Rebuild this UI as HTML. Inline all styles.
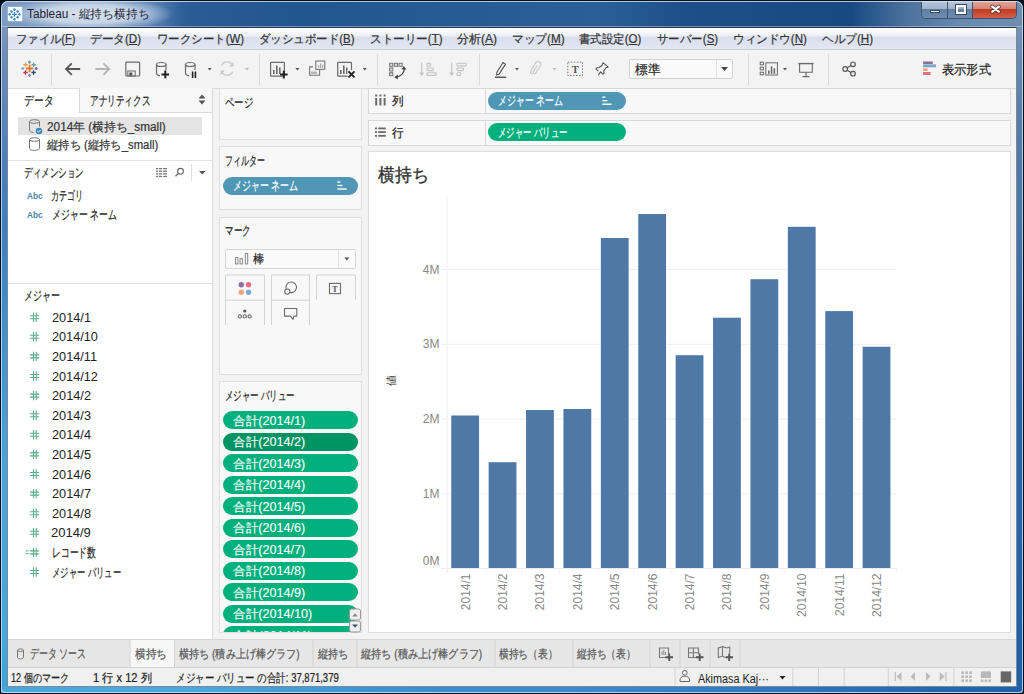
<!DOCTYPE html>
<html lang="ja"><head>
<meta charset="utf-8">
<style>
*{margin:0;padding:0;box-sizing:border-box}
html,body{width:1024px;height:694px;overflow:hidden;background:#06101c}
body{font-family:"Liberation Sans",sans-serif;font-size:12px;color:#333;position:relative}
.a{position:absolute}
.t{position:absolute;white-space:nowrap;line-height:14px;-webkit-text-stroke:0.2px currentColor}
/* frame */
#frame{left:0;top:0;width:1024px;height:694px;border-radius:8px 8px 5px 5px;background:#06101c}
#lf{left:1px;top:8px;width:7px;height:685px;background:linear-gradient(180deg,#7f9cc2 0,#6a8ab8 60px,#4a7fbc 160px,#3c80c2 220px,#4aa3d8 450px,#45a8dc 640px,#3aa0d8 694px)}
#rf{left:1016px;top:8px;width:7px;height:685px;background:linear-gradient(180deg,#7a96b8 0,#5a7ea8 100px,#2a64a8 400px,#2060a8 694px)}
#bf{left:1px;top:686px;width:1022px;height:7px;border-radius:0 0 4px 4px;background:linear-gradient(90deg,#48a8dc 0,#4aa8dc 200px,#3a90d0 400px,#3a88cc 600px,#2a70b8 850px,#2060a8 1022px)}
#gl{left:1px;top:1px;width:1022px;height:692px;border-radius:7px 7px 4px 4px;box-shadow:inset 0 0 0 1px rgba(215,230,245,0.8)}
#cb{left:7px;top:27px;width:1010px;height:660px;border:1px solid #7b8899;border-top-color:#2a3a4c}
#title{left:1px;top:1px;width:1022px;height:26px;border-radius:7px 7px 0 0;
 background:radial-gradient(ellipse 84px 17px at 88px 13px,rgba(222,230,240,0.97) 0%,rgba(205,218,234,0.9) 55%,rgba(160,185,215,0.5) 85%,rgba(120,150,190,0) 100%),linear-gradient(90deg,#7f9cc2 0,#7a98c0 40px,#5f86b6 150px,#3a6aa2 172px,#2a5c95 185px,#215690 300px,#2a5f98 600px,#1d5088 680px,#184a80 850px,#4f74a0 910px,#6a8ab0 960px,#6e8db0 1022px)}
#client{left:8px;top:28px;width:1008px;height:658px;background:#f3f3f3;overflow:hidden}
#menubar{left:0;top:0;width:1008px;height:22px;background:linear-gradient(180deg,#ffffff 0,#f6f8fb 4px,#eceff7 8px,#d9dfee 9px,#dbe0ee 12px,#e3e7f3 21px);border-bottom:1px solid #c8cdd9}
#toolbar{left:0;top:22px;width:1008px;height:39px;background:#f3f3f3;border-bottom:1px solid #dcdcdc}
.sep{position:absolute;width:1px;background:#d8d8d8}
.panel{position:absolute;background:#f8f8f8;border:1px solid #dfdfdf}
.pill{position:absolute;height:18px;border-radius:9px;color:#fff;line-height:18px;padding-left:10px;white-space:nowrap}
.blue{background:#4f97b5}
.green{background:#00b07c}
.pt{position:absolute;left:10px;top:2.6px;line-height:14px;font-size:13px;-webkit-text-stroke:0.2px currentColor}
</style>
</head>
<body>
<div id="frame" class="a"></div>
<div id="lf" class="a"></div><div id="rf" class="a"></div><div id="bf" class="a"></div>
<div id="title" class="a">
  <svg class="a" style="left:6px;top:5px" width="16" height="16" viewBox="0 0 16 16">
    <rect x="0.8" y="0.8" width="14.4" height="14.4" fill="#f8fafc"></rect>
    <g stroke="#3a8cc8" stroke-width="1.3" fill="none">
      <path d="M7.5 6v4.8M5.1 8.4h4.8"></path>
      <path d="M7.5 2.3v2.6M6.2 3.6h2.6M7.5 12v2.6M6.2 13.3h2.6M2.6 7.1v2.6M1.3 8.4h2.6M12.4 7.1v2.6M11.1 8.4h2.6"></path>
      <path d="M4.5 4.2v2.6M3.2 5.5h2.6M10.6 4.2v2.6M9.3 5.5h2.6M4.5 10v2.6M3.2 11.3h2.6M10.6 10v2.6M9.3 11.3h2.6"></path>
    </g>
  </svg>
  <div class="t" style="left: 26.2px; top: 6px; color: rgb(26, 34, 48); font-size: 12px; -webkit-text-stroke: 0px; transform: scaleX(0.9811); transform-origin: 0px 0px;">Tableau - 縦持ち横持ち</div>
  <div class="a" style="left:0;top:25px;width:1022px;height:1px;background:rgba(205,220,238,0.45)"></div>
</div>
<!-- caption buttons -->
<div class="a" style="left:921px;top:1px;width:96px;height:18px;border-radius:0 0 5px 5px;border:1px solid #3d5470;border-top:none;overflow:hidden">
  <div class="a" style="left:0;top:0;width:26px;height:17px;background:linear-gradient(180deg,#b9c8da 0,#9fb3ca 45%,#5f7fa3 50%,#6d8cae 100%);border-right:1px solid #3d5470"></div>
  <div class="a" style="left:26px;top:0;width:25px;height:17px;background:linear-gradient(180deg,#b9c8da 0,#9fb3ca 45%,#5f7fa3 50%,#6d8cae 100%);border-right:1px solid #3d5470"></div>
  <div class="a" style="left:51px;top:0;width:45px;height:17px;background:linear-gradient(180deg,#e4a79a 0,#d58575 45%,#c23a1f 50%,#d0604a 100%)"></div>
  <div class="a" style="left:8px;top:9px;width:10px;height:3px;background:#fff;border:1px solid #3a4a5c"></div>
  <div class="a" style="left:34px;top:4px;width:10px;height:9px;border:2px solid #fff;outline:1px solid #3a4a5c"></div>
  <svg class="a" style="left:64px;top:2px" width="16" height="14"><path d="M6.3 3.7l6.6 4.9M12.9 3.7l-6.6 4.9" stroke="#3a2a2a" stroke-width="4" stroke-linecap="round" opacity="0.7"></path><path d="M6.3 3.7l6.6 4.9M12.9 3.7l-6.6 4.9" stroke="#fff" stroke-width="2.3" stroke-linecap="round"></path></svg>
</div>

<div id="client" class="a"></div>
<div id="gl" class="a"></div>
<div id="cb" class="a"></div>
<div id="menubar" class="a" style="left:8px;top:28px">
    <div class="t" style="left: 7.7px; top: 4px; transform: scaleX(0.9409); transform-origin: 0px 0px;">ファイル(<u>F</u>)</div>
    <div class="t" style="left: 82.2px; top: 4px; transform: scaleX(0.9702); transform-origin: 0px 0px;">データ(<u>D</u>)</div>
    <div class="t" style="left: 149.2px; top: 4px; transform: scaleX(0.9537); transform-origin: 0px 0px;">ワークシート(<u>W</u>)</div>
    <div class="t" style="left: 251.2px; top: 4px; transform: scaleX(0.9559); transform-origin: 0px 0px;">ダッシュボード(<u>B</u>)</div>
    <div class="t" style="left: 361.7px; top: 4px; transform: scaleX(0.9636); transform-origin: 0px 0px;">ストーリー(<u>T</u>)</div>
    <div class="t" style="left: 449.2px; top: 4px; transform: scaleX(1.0021); transform-origin: 0px 0px;">分析(<u>A</u>)</div>
    <div class="t" style="left: 504.2px; top: 4px; transform: scaleX(0.9741); transform-origin: 0px 0px;">マップ(<u>M</u>)</div>
    <div class="t" style="left: 571.2px; top: 4px; transform: scaleX(0.9542); transform-origin: 0px 0px;">書式設定(<u>O</u>)</div>
    <div class="t" style="left: 649.2px; top: 4px; transform: scaleX(0.9545); transform-origin: 0px 0px;">サーバー(<u>S</u>)</div>
    <div class="t" style="left: 725.45px; top: 4px; transform: scaleX(0.9632); transform-origin: 0px 0px;">ウィンドウ(<u>N</u>)</div>
    <div class="t" style="left: 814.2px; top: 4px; transform: scaleX(0.9702); transform-origin: 0px 0px;">ヘルプ(<u>H</u>)</div>
</div>
<div id="toolbar" class="a" style="left:8px;top:50px"></div>
<svg class="a" style="left:0;top:0" width="1024" height="694" viewBox="0 0 1024 694">
<!-- tableau logo -->
<g stroke-width="1.4" fill="none">
 <path d="M29.6 64.8v7.4M25.9 68.5h7.4" stroke="#e8762b" stroke-width="1.8"></path>
 <path d="M29.5 60.5v3.2M27.9 62.1h3.2" stroke="#7199a6"></path>
 <path d="M25.5 62.5v4.4M23.3 64.7h4.4" stroke="#f0a24b"></path>
 <path d="M33.6 62.5v4.4M31.4 64.7h4.4" stroke="#6a9cab"></path>
 <path d="M22.8 67v3M21.3 68.5h3" stroke="#7ab0c0"></path>
 <path d="M36.2 67v3M34.7 68.5h3" stroke="#6e6ea0"></path>
 <path d="M25.5 70.3v4.4M23.3 72.5h4.4" stroke="#d0344a"></path>
 <path d="M33.6 70.3v4.4M31.4 72.5h4.4" stroke="#2b4f8a"></path>
 <path d="M29.5 73.8v3.2M27.9 75.4h3.2" stroke="#8a8ab8"></path>
</g>
<g fill="#d9d9d9">
 <rect x="51" y="54" width="1" height="31"></rect>
 <rect x="259" y="54" width="1" height="31"></rect>
 <rect x="377" y="54" width="1" height="31"></rect>
 <rect x="479" y="54" width="1" height="31"></rect>
 <rect x="748" y="54" width="1" height="31"></rect>
 <rect x="828" y="54" width="1" height="31"></rect>
</g>
<!-- back/forward -->
<path d="M80.2 69H66.5M71.8 63.3L66 69l5.8 5.8" stroke="#555" stroke-width="1.8" fill="none"></path>
<path d="M95.3 69h13.7M103.4 63.3l5.8 5.7-5.8 5.8" stroke="#b4b4b4" stroke-width="1.8" fill="none"></path>
<!-- save -->
<rect x="125.8" y="62.2" width="13.8" height="13.8" rx="0.8" stroke="#6a6a6a" stroke-width="1.2" fill="none"></rect>
<rect x="127.8" y="71" width="7.4" height="5" stroke="#6a6a6a" stroke-width="1" fill="none"></rect>
<rect x="129.3" y="72.5" width="3" height="3" fill="#555"></rect>
<!-- add ds -->
<g stroke="#6a6a6a" stroke-width="1.2" fill="none">
 <path d="M156.5 64.5v8.8c0 1.3 1.6 2.2 3.5 2.5M166 64.5v5.5"></path>
 <ellipse cx="161.25" cy="64.5" rx="4.75" ry="2"></ellipse>
</g>
<path d="M165.3 70.6v7.6M161.5 74.4h7.6" stroke="#222" stroke-width="2"></path>
<!-- pause ds -->
<g stroke="#6a6a6a" stroke-width="1.2" fill="none">
 <path d="M185.5 64.5v8.8c0 1.3 1.6 2.2 3.5 2.5M195 64.5v5.5"></path>
 <ellipse cx="190.25" cy="64.5" rx="4.75" ry="2"></ellipse>
</g>
<path d="M192.6 71.5v6.5M195.4 71.5v6.5" stroke="#222" stroke-width="1.6"></path>
<g fill="#555">
 <path d="M207.7 68h4l-2 2.4z"></path>
 <path d="M295.4 68h4l-2 2.4z"></path>
 <path d="M362.7 68h4l-2 2.4z"></path>
 <path d="M515 68h4l-2 2.4z"></path>
 <path d="M783 68h4l-2 2.4z"></path>
</g>
<g fill="#bdbdbd">
 <path d="M245 68h4l-2 2.4z"></path>
 <path d="M552.5 68h4l-2 2.4z"></path>
</g>
<!-- refresh -->
<g stroke="#c9c9c9" stroke-width="1.3" fill="none">
 <path d="M221.5 65.5a6.2 6.2 0 0 1 11 -0.5"></path>
 <path d="M232.8 71.5a6.2 6.2 0 0 1 -11 0.5"></path>
</g>
<path d="M233.5 61.8v4.8h-4.4z" fill="#c9c9c9"></path>
<path d="M220.5 75.2v-4.8h4.4z" fill="#c9c9c9"></path>
<!-- new worksheet -->
<rect x="270.6" y="62.4" width="13.8" height="13.8" rx="0.8" stroke="#6a6a6a" stroke-width="1.2" fill="none"></rect>
<g fill="#6a6a6a"><rect x="273" y="70" width="1.6" height="4"></rect><rect x="276" y="65.5" width="1.6" height="8.5"></rect><rect x="279" y="67.5" width="1.6" height="6.5"></rect></g>
<path d="M283.8 70.8v7.6M280 74.6h7.6" stroke="#222" stroke-width="2"></path>
<!-- duplicate -->
<g stroke="#777" stroke-width="1.1" fill="none">
 <rect x="315.8" y="61" width="9" height="8.4"></rect>
 <path d="M313 66.9h-3.4v8.4h10v-6"></path>
</g>
<g fill="#aaa"><rect x="318" y="65" width="1.2" height="3"></rect><rect x="320" y="63.5" width="1.2" height="4.5"></rect><rect x="322" y="64.5" width="1.2" height="3.5"></rect></g>
<g fill="#777"><rect x="311.5" y="71.5" width="1" height="2.5"></rect><rect x="313.5" y="71.5" width="1" height="2.5"></rect><rect x="315.5" y="71.5" width="1" height="2.5"></rect></g>
<!-- clear sheet -->
<rect x="337.7" y="62.4" width="13.8" height="13.8" rx="0.8" stroke="#6a6a6a" stroke-width="1.2" fill="none"></rect>
<g fill="#6a6a6a"><rect x="340" y="70" width="1.6" height="4"></rect><rect x="343" y="65.5" width="1.6" height="8.5"></rect><rect x="346" y="67.5" width="1.6" height="6.5"></rect></g>
<rect x="347.5" y="70" width="8" height="8" fill="#f3f3f3"></rect>
<path d="M348.5 71.4l6 6M354.5 71.4l-6 6" stroke="#222" stroke-width="1.9"></path>
<!-- swap -->
<g stroke="#777" stroke-width="1" fill="#ddd">
 <rect x="389.6" y="63.3" width="3.2" height="3"></rect><rect x="394.3" y="63.3" width="3.2" height="3"></rect><rect x="399" y="63.3" width="3.2" height="3"></rect>
 <rect x="389.6" y="68" width="3.2" height="3"></rect>
 <rect x="389.6" y="72.7" width="3.2" height="3"></rect>
</g>
<path d="M396 77a9 9 0 0 0 8.5-8.5" stroke="#444" stroke-width="1.2" fill="none"></path>
<path d="M403.7 66l2.8 3.6h-5z" fill="#444"></path>
<path d="M394.5 77.2l3.3-2.8v5z" fill="#444"></path>
<!-- sort asc/desc -->
<g stroke="#c2c2c2" stroke-width="1.1" fill="none">
 <path d="M421.7 62.5v12"></path>
 <rect x="426.9" y="63.3" width="3.7" height="2.6" rx="0.8"></rect>
 <rect x="426.9" y="68" width="6.5" height="2.6" rx="0.8"></rect>
 <rect x="426.9" y="72.8" width="9.3" height="2.6" rx="0.8"></rect>
 <path d="M451.7 62.5v12"></path>
 <rect x="456.9" y="63.3" width="9.3" height="2.6" rx="0.8"></rect>
 <rect x="456.9" y="68" width="6.5" height="2.6" rx="0.8"></rect>
 <rect x="456.9" y="72.8" width="3.7" height="2.6" rx="0.8"></rect>
</g>
<path d="M419.2 72.5h5l-2.5 3.5z M449.2 72.5h5l-2.5 3.5z" fill="#c2c2c2"></path>
<!-- pen -->
<path d="M503 62.5l2.5 1.6-6.2 9.8-2.7 1.2 0.3-2.9z" stroke="#555" stroke-width="1.1" fill="none" stroke-linejoin="round"></path>
<rect x="495" y="76.6" width="11.2" height="1.3" fill="#444"></rect>
<!-- paperclip -->
<path d="M532.5 74.5c-1.8-1-2.2-2.8-1.4-4.3l4.5-7.3c0.9-1.4 2.7-1.7 4-0.9 1.3 0.8 1.6 2.4 0.8 3.8l-4.3 7c-0.5 0.8-1.4 1.1-2.1 0.7-0.7-0.4-0.9-1.3-0.4-2.1l3.8-6.2" stroke="#c6c6c6" stroke-width="1.1" fill="none"></path>
<!-- T label -->
<rect x="567.8" y="62.1" width="14.7" height="13.4" stroke="#777" stroke-width="1" stroke-dasharray="1.5 1.5" fill="none"></rect>
<text x="575.2" y="73" font-family="Liberation Serif" font-weight="bold" font-size="10.5" fill="#555" text-anchor="middle">T</text>
<!-- pin -->
<path d="M603 62.6l5.2 4.5-2.3 0.6-2.2 3.2 0.3 2.5-1.1 0.8-2.3-2.3-2.4 3.3M603 62.6l-0.8 2.6-3.1 2.3-2.3 0.2-0.8 1.2 2.4 2.2" stroke="#555" stroke-width="1.1" fill="none" stroke-linejoin="round"></path>
<!-- show me cards icon -->
<g stroke="#6a6a6a" stroke-width="1" fill="none">
 <rect x="760.2" y="62.2" width="3.2" height="2.6"></rect><rect x="760.2" y="67.2" width="3.2" height="2.6"></rect><rect x="760.2" y="72.2" width="3.2" height="2.6"></rect>
 <rect x="765.8" y="62.8" width="11.6" height="12.2"></rect>
</g>
<g fill="#666"><rect x="768" y="70.5" width="1.5" height="3.3"></rect><rect x="770.8" y="66.3" width="1.5" height="7.5"></rect><rect x="773.6" y="68.3" width="1.5" height="5.5"></rect></g>
<!-- presentation -->
<g stroke="#6a6a6a" fill="none">
 <path d="M798.3 63.6h15.3" stroke-width="1.4"></path>
 <path d="M799.6 64v8.3h12.7V64M806 72.3v3.8M802.5 76.6h7" stroke-width="1.1"></path>
</g>
<!-- share -->
<g stroke="#555" stroke-width="1.2" fill="none">
 <circle cx="853" cy="64.3" r="2.3"></circle><circle cx="845.2" cy="69" r="2.3"></circle><circle cx="853" cy="73.7" r="2.3"></circle>
 <path d="M847.2 67.8l3.8-2.3M847.2 70.2l3.8 2.3"></path>
</g>
<!-- show me -->
<rect x="923.1" y="61.5" width="9.7" height="2.5" fill="#8e6f98"></rect>
<rect x="923.1" y="64.4" width="12.9" height="2.9" fill="#7fa3c9"></rect>
<rect x="923.1" y="68.4" width="4.6" height="2.6" fill="#eba77c"></rect>
<rect x="923.1" y="72" width="7.5" height="3" fill="#ea6f7f"></rect>
</svg>
<div class="a" style="left:629px;top:59px;width:104px;height:20px;background:#fafafa;border:1px solid #d3d3d3;border-radius:2px">
  <div class="a" style="left:86px;top:0;width:1px;height:18px;background:#e2e2e2"></div>
  <svg class="a" style="left:91px;top:7px" width="8" height="5"><path d="M0 0h7l-3.5 4z" fill="#444"></path></svg>
  <div class="t" style="left: 5.2px; top: 2.5px; font-size: 13px; color: rgb(34, 34, 34); transform: scaleX(0.9654); transform-origin: 0px 0px;">標準</div>
</div>
<div class="t" style="left: 941.6px; top: 63px; font-size: 13px; color: rgb(34, 34, 34); transform: scaleX(0.9404); transform-origin: 0px 0px;">表示形式</div>

<div class="a" style="left:8px;top:89px;width:204px;height:550px;background:#fff"></div>
<div class="a" style="left:212px;top:89px;width:1px;height:550px;background:#dcdcdc"></div>
<div class="a" style="left:79px;top:88px;width:134px;height:25px;background:#f8f8f8;border-left:1px solid #dadada;border-bottom:1px solid #dadada;border-right:1px solid #dadada"></div>
<div class="t" style="font-size: 13px; left: 23.7px; top: 94px; color: rgb(34, 34, 34); transform: scaleX(0.7513); transform-origin: 0px 0px;">データ</div>
<div class="t" style="font-size: 13px; left: 89.7px; top: 94px; color: rgb(34, 34, 34); transform: scaleX(0.6604); transform-origin: 0px 0px;">アナリティクス</div>
<svg class="a" style="left:198px;top:94px" width="8" height="11"><path d="M0.5 4.5h7l-3.5-4zM0.5 6.5h7l-3.5 4z" fill="#555"></path></svg>
<div class="a" style="left:18px;top:117px;width:184px;height:18px;background:#e4e4e4"></div>
<svg class="a" style="left:0;top:0" width="1024" height="694">
 <g stroke="#777" stroke-width="1" fill="none">
  <ellipse cx="34.5" cy="121.5" rx="5" ry="1.8"></ellipse>
  <path d="M29.5 121.5v9c0 1 1.5 1.8 4 2M39.5 121.5v5"></path>
  <ellipse cx="34.5" cy="139.5" rx="5" ry="1.8"></ellipse>
  <path d="M29.5 139.5v9c0 1.1 2.2 1.9 5 1.9s5-0.8 5-1.9v-9"></path>
 </g>
 <circle cx="39" cy="131" r="3.3" fill="#3d8bb5"></circle>
 <path d="M37.3 131l1.2 1.2 2.2-2.3" stroke="#fff" stroke-width="0.9" fill="none"></path>
 <g fill="#777">
  <rect x="156" y="168" width="2.2" height="1.3"></rect><rect x="159" y="168" width="3.2" height="1.3"></rect><rect x="163.2" y="168" width="3.8" height="1.3"></rect><rect x="156" y="170.6" width="2.2" height="1.3"></rect><rect x="159" y="170.6" width="3.2" height="1.3"></rect><rect x="163.2" y="170.6" width="3.8" height="1.3"></rect><rect x="156" y="173.2" width="2.2" height="1.3"></rect><rect x="159" y="173.2" width="3.2" height="1.3"></rect><rect x="163.2" y="173.2" width="3.8" height="1.3"></rect><rect x="156" y="175.8" width="2.2" height="1.3"></rect><rect x="159" y="175.8" width="3.2" height="1.3"></rect><rect x="163.2" y="175.8" width="3.8" height="1.3"></rect>
 </g>
 <circle cx="180.5" cy="171.3" r="2.9" stroke="#666" stroke-width="1.1" fill="none"></circle>
 <path d="M178.4 173.4l-2.9 2.9" stroke="#666" stroke-width="1.3"></path>
 <rect x="191" y="164" width="1" height="17" fill="#e0e0e0"></rect>
 <path d="M199 171h6.6l-3.3 3.6z" fill="#555"></path>
 <g stroke="#5aae8a" stroke-width="1.1" fill="none">
 <path d="M33.5 312.5v9.4M36.2 312.5v9.4M30 315.7h9.1M30 318.7h9.1"></path>
<path d="M33.5 332.1v9.4M36.2 332.1v9.4M30 335.3h9.1M30 338.3h9.1"></path>
<path d="M33.5 351.7v9.4M36.2 351.7v9.4M30 354.9h9.1M30 357.9h9.1"></path>
<path d="M33.5 371.3v9.4M36.2 371.3v9.4M30 374.5h9.1M30 377.5h9.1"></path>
<path d="M33.5 390.9v9.4M36.2 390.9v9.4M30 394.1h9.1M30 397.1h9.1"></path>
<path d="M33.5 410.5v9.4M36.2 410.5v9.4M30 413.7h9.1M30 416.7h9.1"></path>
<path d="M33.5 430.1v9.4M36.2 430.1v9.4M30 433.3h9.1M30 436.3h9.1"></path>
<path d="M33.5 449.7v9.4M36.2 449.7v9.4M30 452.9h9.1M30 455.9h9.1"></path>
<path d="M33.5 469.3v9.4M36.2 469.3v9.4M30 472.5h9.1M30 475.5h9.1"></path>
<path d="M33.5 488.9v9.4M36.2 488.9v9.4M30 492.1h9.1M30 495.1h9.1"></path>
<path d="M33.5 508.5v9.4M36.2 508.5v9.4M30 511.7h9.1M30 514.7h9.1"></path>
<path d="M33.5 528.1v9.4M36.2 528.1v9.4M30 531.3h9.1M30 534.3h9.1"></path>
<path d="M33.5 547.7v9.4M36.2 547.7v9.4M30 550.9h9.1M30 553.9h9.1"></path>
<path d="M33.5 567.3v9.4M36.2 567.3v9.4M30 570.5h9.1M30 573.5h9.1"></path>

 </g>
 <path d="M26 550.8h2.7M26 553.6h2.7" stroke="#5aae8a" stroke-width="1"></path>
</svg>
<div class="t" style="left: 46.6px; top: 120px; color: rgb(51, 51, 51); transform: scaleX(0.9834); transform-origin: 0px 0px;">2014年 (横持ち_small)</div>
<div class="t" style="left: 46.6px; top: 138px; color: rgb(51, 51, 51); transform: scaleX(0.9422); transform-origin: 0px 0px;">縦持ち (縦持ち_small)</div>
<div class="a" style="left:8px;top:160px;width:204px;height:1px;background:#e2e2e2"></div>
<div class="t" style="font-size: 13px; left: 23.8px; top: 166px; color: rgb(34, 34, 34); transform: scaleX(0.6593); transform-origin: 0px 0px;">ディメンション</div>
<div class="t" style="left: 26.7px; top: 189px; color: rgb(74, 134, 168); font-size: 9.5px; font-weight: bold; transform: scaleX(0.8689); transform-origin: 0px 0px; -webkit-text-stroke: 0px;">Abc</div>
<div class="t" style="left: 26.7px; top: 208px; color: rgb(74, 134, 168); font-size: 9.5px; font-weight: bold; transform: scaleX(0.8689); transform-origin: 0px 0px; -webkit-text-stroke: 0px;">Abc</div>
<div class="t" style="font-size: 13px; left: 51.3px; top: 189px; color: rgb(34, 34, 34); transform: scaleX(0.625); transform-origin: 0px 0px;">カテゴリ</div>
<div class="t" style="font-size: 13px; left: 51.7px; top: 208px; color: rgb(34, 34, 34); transform: scaleX(0.6827); transform-origin: 0px 0px;">メジャー ネーム</div>
<div class="a" style="left:8px;top:283px;width:204px;height:1px;background:#e2e2e2"></div>
<div class="t" style="font-size: 13px; left: 24.45px; top: 289px; color: rgb(34, 34, 34); transform: scaleX(0.6894); transform-origin: 0px 0px;">メジャー</div>
<div style="color:#222">
<div class="t" style="left: 51.7px; top: 310.7px; transform: scaleX(1.0626); transform-origin: 0px 0px; -webkit-text-stroke: 0px;">2014/1</div>
<div class="t" style="left: 51.7px; top: 330.3px; transform: scaleX(1.0567); transform-origin: 0px 0px; -webkit-text-stroke: 0px;">2014/10</div>
<div class="t" style="left: 51.7px; top: 349.9px; transform: scaleX(1.0612); transform-origin: 0px 0px; -webkit-text-stroke: 0px;">2014/11</div>
<div class="t" style="left: 51.7px; top: 369.5px; transform: scaleX(1.0567); transform-origin: 0px 0px; -webkit-text-stroke: 0px;">2014/12</div>
<div class="t" style="left: 51.7px; top: 389.1px; transform: scaleX(1.0626); transform-origin: 0px 0px; -webkit-text-stroke: 0px;">2014/2</div>
<div class="t" style="left: 51.7px; top: 408.7px; transform: scaleX(1.0626); transform-origin: 0px 0px; -webkit-text-stroke: 0px;">2014/3</div>
<div class="t" style="left: 51.7px; top: 428.3px; transform: scaleX(1.0626); transform-origin: 0px 0px; -webkit-text-stroke: 0px;">2014/4</div>
<div class="t" style="left: 51.7px; top: 447.9px; transform: scaleX(1.0626); transform-origin: 0px 0px; -webkit-text-stroke: 0px;">2014/5</div>
<div class="t" style="left: 51.7px; top: 467.5px; transform: scaleX(1.0626); transform-origin: 0px 0px; -webkit-text-stroke: 0px;">2014/6</div>
<div class="t" style="left: 51.7px; top: 487.1px; transform: scaleX(1.0626); transform-origin: 0px 0px; -webkit-text-stroke: 0px;">2014/7</div>
<div class="t" style="left: 51.7px; top: 506.7px; transform: scaleX(1.0626); transform-origin: 0px 0px; -webkit-text-stroke: 0px;">2014/8</div>
<div class="t" style="left: 51.3px; top: 526.3px; transform: scaleX(1.083); transform-origin: 0px 0px; -webkit-text-stroke: 0px;">2014/9</div>
<div class="t" style="font-size: 13px; left: 51.7px; top: 545.9px; transform: scaleX(0.6769); transform-origin: 0px 0px;">レコード数</div>
<div class="t" style="font-size: 13px; left: 51.7px; top: 565.5px; transform: scaleX(0.6411); transform-origin: 0px 0px;">メジャー バリュー</div>
</div>

<div class="a" style="left:213px;top:89px;width:155px;height:550px;background:#f3f3f3"></div>
<div class="panel" style="left:219px;top:88px;width:143px;height:52px"></div>
<div class="t" style="font-size: 13px; left: 224.7px; top: 96px; color: rgb(34, 34, 34); transform: scaleX(0.7179); transform-origin: 0px 0px;">ページ</div>
<div class="panel" style="left:219px;top:146px;width:143px;height:64px"></div>
<div class="t" style="font-size: 13px; left: 224.7px; top: 154px; color: rgb(34, 34, 34); transform: scaleX(0.6154); transform-origin: 0px 0px;">フィルター</div>
<div class="pill blue" style="left:223px;top:176.5px;width:135px"><span class="pt" style="left: 10.45px; transform: scaleX(0.6864); transform-origin: 0px 0px;">メジャー ネーム</span></div>
<div class="panel" style="left:219px;top:216.5px;width:143px;height:158px"></div>
<div class="t" style="font-size: 13px; left: 225.3px; top: 224px; color: rgb(34, 34, 34); transform: scaleX(0.6564); transform-origin: 0px 0px;">マーク</div>
<div class="a" style="left:225px;top:249px;width:131px;height:20px;background:#fafafa;border:1px solid #d6d6d6;border-radius:2px"></div>
<div class="a" style="left:338px;top:250px;width:1px;height:18px;background:#e0e0e0"></div>
<div class="t" style="left: 252.8px; top: 252px; color: rgb(34, 34, 34); transform: scaleX(0.9375); transform-origin: 0px 0px;">棒</div>
<div class="panel" style="left:219px;top:380.5px;width:143px;height:252px"></div>
<div class="t" style="font-size: 13px; left: 225.3px; top: 389px; color: rgb(34, 34, 34); transform: scaleX(0.6481); transform-origin: 0px 0px;">メジャー バリュー</div>
<div class="a" style="left:220px;top:381px;width:141px;height:251px;overflow:hidden">
<div class="a" style="left:-220px;top:-381px;width:400px;height:700px">
<div class="pill" style="left:223px;top:411.0px;width:135px;background:#02b07d"><span class="pt" style="font-size: 12px; -webkit-text-stroke: 0.1px rgb(255, 255, 255); left: 10.2px; transform: scaleX(1.0494); transform-origin: 0px 0px;">合計(2014/1)</span></div>
<div class="pill" style="left:223px;top:432.5px;width:135px;background:#009463"><span class="pt" style="font-size: 12px; -webkit-text-stroke: 0.1px rgb(255, 255, 255); left: 10.2px; transform: scaleX(1.0494); transform-origin: 0px 0px;">合計(2014/2)</span></div>
<div class="pill" style="left:223px;top:454.0px;width:135px;background:#02b07d"><span class="pt" style="font-size: 12px; -webkit-text-stroke: 0.1px rgb(255, 255, 255); left: 10.2px; transform: scaleX(1.0494); transform-origin: 0px 0px;">合計(2014/3)</span></div>
<div class="pill" style="left:223px;top:475.5px;width:135px;background:#02b07d"><span class="pt" style="font-size: 12px; -webkit-text-stroke: 0.1px rgb(255, 255, 255); left: 10.2px; transform: scaleX(1.0494); transform-origin: 0px 0px;">合計(2014/4)</span></div>
<div class="pill" style="left:223px;top:497.0px;width:135px;background:#02b07d"><span class="pt" style="font-size: 12px; -webkit-text-stroke: 0.1px rgb(255, 255, 255); left: 10.2px; transform: scaleX(1.0494); transform-origin: 0px 0px;">合計(2014/5)</span></div>
<div class="pill" style="left:223px;top:518.5px;width:135px;background:#02b07d"><span class="pt" style="font-size: 12px; -webkit-text-stroke: 0.1px rgb(255, 255, 255); left: 10.2px; transform: scaleX(1.0494); transform-origin: 0px 0px;">合計(2014/6)</span></div>
<div class="pill" style="left:223px;top:540.0px;width:135px;background:#02b07d"><span class="pt" style="font-size: 12px; -webkit-text-stroke: 0.1px rgb(255, 255, 255); left: 10.2px; transform: scaleX(1.0494); transform-origin: 0px 0px;">合計(2014/7)</span></div>
<div class="pill" style="left:223px;top:561.5px;width:135px;background:#02b07d"><span class="pt" style="font-size: 12px; -webkit-text-stroke: 0.1px rgb(255, 255, 255); left: 10.2px; transform: scaleX(1.0494); transform-origin: 0px 0px;">合計(2014/8)</span></div>
<div class="pill" style="left:223px;top:583.0px;width:135px;background:#02b07d"><span class="pt" style="font-size: 12px; -webkit-text-stroke: 0.1px rgb(255, 255, 255); left: 10.2px; transform: scaleX(1.0494); transform-origin: 0px 0px;">合計(2014/9)</span></div>
<div class="pill" style="left:223px;top:604.5px;width:135px;background:#02b07d"><span class="pt" style="font-size: 12px; -webkit-text-stroke: 0.1px rgb(255, 255, 255); left: 10.2px; transform: scaleX(1.0494); transform-origin: 0px 0px;">合計(2014/10)</span></div>
<div class="pill" style="left:223px;top:626.0px;width:135px;background:#02b07d"><span class="pt" style="font-size: 12px; -webkit-text-stroke: 0.1px rgb(255, 255, 255); left: 10.2px; transform: scaleX(1.062); transform-origin: 0px 0px;">合計(2014/11)</span></div>
</div></div>
<svg class="a" style="left:0;top:0" width="1024" height="694">
 <g fill="#fff"><rect x="337.4" y="181.3" width="2.9" height="1.4"></rect><rect x="337.4" y="184.8" width="5" height="1.4"></rect><rect x="337.4" y="188.3" width="9.2" height="1.4"></rect></g>
 <path d="M344.3 257.5h5l-2.5 3z" fill="#555"></path>
 <g stroke="#8a8a8a" stroke-width="1" fill="none">
  <rect x="235.5" y="257.5" width="2.4" height="6.4"></rect><rect x="240" y="258.7" width="2.4" height="5.2"></rect><rect x="245.3" y="253.5" width="2.4" height="10.4"></rect>
 </g>
 <g stroke="#d4d4d4" stroke-width="1" fill="none">
  <path d="M225.5 325v-50h39v50M225.5 300.2h39"></path>
  <path d="M271.5 325v-50h38v50M271.5 300.2h38"></path>
  <path d="M316.5 300v-25h39v25"></path>
 </g>
 <circle cx="241.3" cy="284.8" r="2.7" fill="#8e6ea0"></circle>
 <circle cx="248.6" cy="284.8" r="2.7" fill="#ee6b81"></circle>
 <circle cx="241.3" cy="292.2" r="2.7" fill="#efa57a"></circle>
 <circle cx="248.6" cy="292.2" r="2.7" fill="#80a9d3"></circle>
 <g stroke="#6a6a6a" stroke-width="1.1" fill="none">
  <circle cx="291.2" cy="287.3" r="5.3"></circle>
  <circle cx="287.3" cy="291.6" r="2.6" fill="#f7f7f7"></circle>
  <rect x="329.5" y="283.4" width="11" height="10.2"></rect>
  <circle cx="239.9" cy="316.4" r="1.6"></circle><circle cx="244.8" cy="316.4" r="1.6"></circle><circle cx="249.6" cy="316.4" r="1.6"></circle>
  <path d="M284.5 308.5h12.3v7.6h-3l-0.8 3.2-2.4-3.2h-6.1z" stroke-linejoin="round"></path>
 </g>
 <circle cx="244.8" cy="311" r="1.6" fill="#555"></circle>
 <text x="335" y="291.8" font-family="Liberation Serif" font-weight="bold" font-size="8" fill="#555" text-anchor="middle">T</text>
 <!-- scroll arrows -->
 <g stroke="#999" stroke-width="1" fill="#f0f0f0">
  <rect x="349.5" y="609" width="11" height="11" rx="2"></rect>
  <rect x="349.5" y="621" width="11" height="11" rx="2"></rect>
 </g>
 <path d="M352.2 616.5h5.6l-2.8-3.2z" fill="#8a8a8a"></path>
 <path d="M352.2 624.5h5.6l-2.8 3.2z" fill="#3d4b66"></path>
</svg>

<div class="a" style="left:368px;top:89px;width:648px;height:550px;background:#f3f3f3"></div>
<div class="panel" style="left:368px;top:88px;width:643px;height:26px;border-color:#d8d8d8"></div>
<div class="panel" style="left:368px;top:120px;width:643px;height:26px;border-color:#d8d8d8"></div>
<div class="a" style="left:485px;top:89px;width:1px;height:24px;background:#d6d6d6"></div>
<div class="a" style="left:485px;top:121px;width:1px;height:24px;background:#d6d6d6"></div>
<div class="t" style="left: 391.7px; top: 94px; color: rgb(34, 34, 34); transform: scaleX(0.9667); transform-origin: 0px 0px;">列</div>
<div class="t" style="left: 391.7px; top: 126px; color: rgb(34, 34, 34); transform: scaleX(0.9667); transform-origin: 0px 0px;">行</div>
<div class="pill blue" style="left:488px;top:91.5px;width:138px"><span class="pt" style="left: 9.8px; transform: scaleX(0.6848); transform-origin: 0px 0px;">メジャー ネーム</span></div>
<div class="pill green" style="left:488px;top:123px;width:138px;background:#02b07d"><span class="pt" style="left: 9.8px; transform: scaleX(0.6439); transform-origin: 0px 0px;">メジャー バリュー</span></div>
<div class="a" style="left:368px;top:151px;width:643px;height:482px;background:#fff;border:1px solid #dcdcdc"></div>
<div class="t" style="left: 378.3px; top: 165px; color: rgb(51, 51, 51); font-size: 18px; line-height: 21px; -webkit-text-stroke: 0.35px rgb(51, 51, 51); transform: scaleX(0.937); transform-origin: 0px 0px;">横持ち</div>
<svg class="a" style="left:0;top:0" width="1024" height="694">
 <g fill="#6a6a6a">
  <rect x="375.2" y="94.5" width="2" height="2"></rect><rect x="379.4" y="94.5" width="2" height="2"></rect><rect x="383.6" y="94.5" width="2" height="2"></rect>
  <rect x="375.2" y="98" width="2" height="7.5"></rect><rect x="379.4" y="98" width="2" height="7.5"></rect><rect x="383.6" y="98" width="2" height="7.5"></rect>
  <rect x="375" y="127.5" width="2" height="1.8"></rect><rect x="378.2" y="127.5" width="7.6" height="1.8"></rect>
  <rect x="375" y="131.2" width="2" height="1.8"></rect><rect x="378.2" y="131.2" width="7.6" height="1.8"></rect>
  <rect x="375" y="134.9" width="2" height="1.8"></rect><rect x="378.2" y="134.9" width="7.6" height="1.8"></rect>
 </g>
 <g fill="#fff"><rect x="602.4" y="96.5" width="2.9" height="1.4"></rect><rect x="602.4" y="100" width="5" height="1.4"></rect><rect x="602.4" y="103.5" width="9.2" height="1.4"></rect></g>
 <g fill="#efefef">
  <rect x="442" y="269" width="454" height="1"></rect>
  <rect x="442" y="343.8" width="454" height="1"></rect>
  <rect x="442" y="418.6" width="454" height="1"></rect>
  <rect x="442" y="493.4" width="454" height="1"></rect>
 </g>
 <rect x="446.5" y="196" width="1" height="377" fill="#f0f0f0"></rect>
 <rect x="441" y="568" width="455" height="1" fill="#eaeaea"></rect>
 <g fill="#f0f0f0"><rect x="447.0" y="568" width="1" height="5"></rect><rect x="484.4" y="568" width="1" height="5"></rect><rect x="521.8" y="568" width="1" height="5"></rect><rect x="559.2" y="568" width="1" height="5"></rect><rect x="596.6" y="568" width="1" height="5"></rect><rect x="634.0" y="568" width="1" height="5"></rect><rect x="671.4" y="568" width="1" height="5"></rect><rect x="708.8" y="568" width="1" height="5"></rect><rect x="746.2" y="568" width="1" height="5"></rect><rect x="783.6" y="568" width="1" height="5"></rect><rect x="821.0" y="568" width="1" height="5"></rect><rect x="858.4" y="568" width="1" height="5"></rect><rect x="895.8" y="568" width="1" height="5"></rect></g>
 <g fill="#4e79a7"><rect x="451.25" y="415.5" width="27.8" height="152.5"></rect><rect x="488.65" y="462.2" width="27.8" height="105.8"></rect><rect x="526.05" y="410.0" width="27.8" height="158.0"></rect><rect x="563.45" y="409.0" width="27.8" height="159.0"></rect><rect x="600.85" y="238.0" width="27.8" height="330.0"></rect><rect x="638.25" y="214.0" width="27.8" height="354.0"></rect><rect x="675.65" y="355.2" width="27.8" height="212.8"></rect><rect x="713.05" y="317.7" width="27.8" height="250.3"></rect><rect x="750.45" y="279.2" width="27.8" height="288.8"></rect><rect x="787.85" y="226.8" width="27.8" height="341.2"></rect><rect x="825.25" y="311.1" width="27.8" height="256.9"></rect><rect x="862.65" y="346.7" width="27.8" height="221.3"></rect></g>
 <g font-family="Liberation Sans" font-size="12" fill="#888" text-anchor="end">
  <text x="439.5" y="273.5">4M</text>
  <text x="439.5" y="348.3">3M</text>
  <text x="439.5" y="423.1">2M</text>
  <text x="439.5" y="497.9">1M</text>
  <text x="439.5" y="564.5">0M</text>
  <text transform="translate(469.6 573.5) rotate(-90)" text-anchor="end">2014/1</text><text transform="translate(507.0 573.5) rotate(-90)" text-anchor="end">2014/2</text><text transform="translate(544.4 573.5) rotate(-90)" text-anchor="end">2014/3</text><text transform="translate(581.9 573.5) rotate(-90)" text-anchor="end">2014/4</text><text transform="translate(619.2 573.5) rotate(-90)" text-anchor="end">2014/5</text><text transform="translate(656.6 573.5) rotate(-90)" text-anchor="end">2014/6</text><text transform="translate(694.0 573.5) rotate(-90)" text-anchor="end">2014/7</text><text transform="translate(731.4 573.5) rotate(-90)" text-anchor="end">2014/8</text><text transform="translate(768.9 573.5) rotate(-90)" text-anchor="end">2014/9</text><text transform="translate(806.2 573.5) rotate(-90)" text-anchor="end">2014/10</text><text transform="translate(843.6 573.5) rotate(-90)" text-anchor="end">2014/11</text><text transform="translate(881.0 573.5) rotate(-90)" text-anchor="end">2014/12</text>
 </g>
</svg>
<div class="a" style="left:386px;top:374.5px;width:11px;height:11px;color:#333;font-size:11px;line-height:11px;transform:rotate(-90deg)">値</div>

<div class="a" style="left:8px;top:639px;width:1008px;height:29px;background:#e6e6e6;border-top:1px solid #d6d6d6;border-bottom:1px solid #d2d2d2"></div>
<div class="a" style="left:130px;top:640px;width:44px;height:27px;background:#f7f7f7"></div>
<div class="a" style="left:8px;top:668px;width:1008px;height:18px;background:#f0f0f0"></div>
<svg class="a" style="left:0;top:0" width="1024" height="694">
 <g fill="#d2d2d2">
  <rect x="129.5" y="640" width="1" height="27"></rect><rect x="174" y="640" width="1" height="27"></rect>
  <rect x="312.5" y="640" width="1" height="27"></rect><rect x="356.5" y="640" width="1" height="27"></rect>
  <rect x="494.5" y="640" width="1" height="27"></rect><rect x="572.5" y="640" width="1" height="27"></rect>
  <rect x="649.5" y="640" width="1" height="27"></rect><rect x="679.5" y="640" width="1" height="27"></rect>
  <rect x="709.5" y="640" width="1" height="27"></rect><rect x="739.5" y="640" width="1" height="27"></rect>
  <rect x="674.5" y="668" width="1" height="18"></rect><rect x="792.3" y="668" width="1" height="18"></rect>
  <rect x="818" y="668" width="1" height="18"></rect><rect x="843.7" y="668" width="1" height="18"></rect>
  <rect x="887.8" y="668" width="1" height="18"></rect><rect x="953.4" y="668" width="1" height="18"></rect>
 </g>
 <g stroke="#777" stroke-width="1" fill="none">
  <ellipse cx="20.5" cy="650.2" rx="3" ry="1.3"></ellipse>
  <path d="M17.5 650.2v7.3c0 0.8 1.3 1.4 3 1.4s3-0.6 3-1.4v-7.3"></path>
 </g>
 <g stroke="#777" stroke-width="1.1" fill="none">
  <path d="M666 657.5h-6.5v-9.5h9v6"></path>
  <path d="M696 657.5h-7.5v-9.5h10v6M688.5 652.8h10M693.4 648v9.5"></path>
  <path d="M725 657.5l-2.5-1.4-4.2 1.4v-9.5l4.2-1.3 4.2 1.3 3-1v6M722.5 646.8v9.3"></path>
 </g>
 <g fill="#888"><rect x="661.5" y="651.5" width="1" height="3.5"></rect><rect x="663.3" y="650" width="1" height="5"></rect><rect x="665.1" y="652" width="1" height="3"></rect></g>
 <path d="M669.2 653.5v7.5M665.5 657.25h7.5M699.7 653.5v7.5M696 657.25h7.5M729.2 653.5v7.5M725.5 657.25h7.5" stroke="#555" stroke-width="1.9"></path>
 <g stroke="#666" stroke-width="1" fill="none">
  <circle cx="684.8" cy="672.8" r="2.4"></circle>
  <path d="M680 681.5v-1.5c0-2.4 2.2-3.9 4.8-3.9s4.8 1.5 4.8 3.9v1.5z"></path>
 </g>
 <path d="M779.5 676h6l-3 3.5z" fill="#222"></path>
 <g fill="#bdbdbd">
  <rect x="894.7" y="672" width="1.2" height="9"></rect><path d="M901.5 672v9l-5-4.5z"></path>
  <path d="M915 672v9l-4.5-4.5z"></path>
  <path d="M926 672v9l4.5-4.5z"></path>
  <path d="M939.7 672v9l5 -4.5z"></path><rect x="945.3" y="672" width="1.2" height="9"></rect>
 </g>
 <g fill="#b8b8b8">
  <rect x="961.4" y="671.4" width="2.6" height="2.6"></rect><rect x="965.3" y="671.4" width="2.6" height="2.6"></rect><rect x="969.2" y="671.4" width="2.6" height="2.6"></rect>
  <rect x="961.4" y="675.4" width="2.6" height="2.6"></rect><rect x="965.3" y="675.4" width="2.6" height="2.6"></rect><rect x="969.2" y="675.4" width="2.6" height="2.6"></rect>
  <rect x="961.4" y="679.4" width="2.6" height="2.6"></rect><rect x="965.3" y="679.4" width="2.6" height="2.6"></rect><rect x="969.2" y="679.4" width="2.6" height="2.6"></rect>
  <rect x="980.8" y="671.4" width="10.2" height="6.6"></rect>
  <rect x="980.8" y="679.5" width="2.6" height="2.6"></rect><rect x="984.6" y="679.5" width="2.6" height="2.6"></rect><rect x="988.4" y="679.5" width="2.6" height="2.6"></rect>
 </g>
 <rect x="1000.7" y="671.4" width="10.5" height="11" fill="#666"></rect>
</svg>
<div style="color:#555">
<div class="t" style="font-size: 13px; left: 29.8px; top: 647px; transform: scaleX(0.6897); transform-origin: 0px 0px;">データ ソース</div>
<div class="t" style="font-size: 12px; left: 135.2px; top: 647px; transform: scaleX(0.8917); transform-origin: 0px 0px;">横持ち</div>
<div class="t" style="font-size: 12px; left: 179.1px; top: 647px; transform: scaleX(0.8414); transform-origin: 0px 0px;">横持ち (積み上げ棒グラフ)</div>
<div class="t" style="font-size: 12px; left: 317.8px; top: 647px; transform: scaleX(0.85); transform-origin: 0px 0px;">縦持ち</div>
<div class="t" style="font-size: 12px; left: 361.3px; top: 647px; transform: scaleX(0.8456); transform-origin: 0px 0px;">縦持ち (積み上げ棒グラフ)</div>
<div class="t" style="font-size: 12px; left: 499.45px; top: 647px; transform: scaleX(0.8104); transform-origin: 0px 0px;">横持ち（表）</div>
<div class="t" style="font-size: 12px; left: 576.9px; top: 647px; transform: scaleX(0.8153); transform-origin: 0px 0px;">縦持ち（表）</div>
</div>
<div style="color:#222">
<div class="t" style="left: 11.1px; top: 671px; transform: scaleX(0.7589); transform-origin: 0px 0px;">12 個のマーク</div>
<div class="t" style="left: 93px; top: 671px; transform: scaleX(0.9265); transform-origin: 0px 0px;">1 行 x 12 列</div>
<div class="t" style="left: 176.3px; top: 671px; transform: scaleX(0.7923); transform-origin: 0px 0px;">メジャー バリュー の合計: 37,871,379</div>
<div class="t" style="left: 698.3px; top: 672px; transform: scaleX(0.901); transform-origin: 0px 0px; -webkit-text-stroke: 0px;">Akimasa Kaj···</div>
</div>



</body></html>
